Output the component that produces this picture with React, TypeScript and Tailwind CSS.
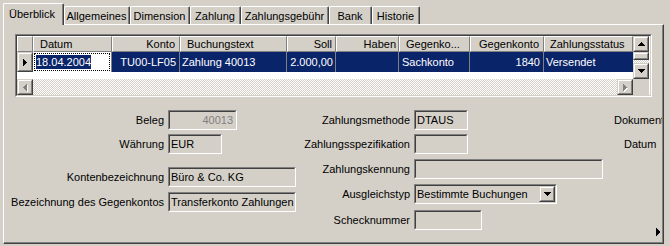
import React from "react";

type Kids = { children?: React.ReactNode };

function Tri({ dir, color = "#000", w, h }: { dir: "up" | "down" | "left" | "right"; color?: string; w: number; h: number }) {
  const pts =
    dir === "up"
      ? `0,${h} ${w},${h} ${w / 2},0`
      : dir === "down"
      ? `0,0 ${w},0 ${w / 2},${h}`
      : dir === "left"
      ? `${w},0 ${w},${h} 0,${h / 2}`
      : `0,0 0,${h} ${w},${h / 2}`;
  return (
    <svg width={w} height={h} viewBox={`0 0 ${w} ${h}`} shapeRendering="crispEdges" className="block">
      <polygon points={pts} fill={color} />
    </svg>
  );
}

function DisabledTri({ dir, w, h }: { dir: "left" | "right"; w: number; h: number }) {
  return (
    <div className="relative">
      <div className="absolute left-[1px] top-[1px]">
        <Tri dir={dir} color="#ffffff" w={w} h={h} />
      </div>
      <div className="relative">
        <Tri dir={dir} color="#808080" w={w} h={h} />
      </div>
    </div>
  );
}

function Raised({ cls, children }: { cls: string } & Kids) {
  return (
    <div className={`${cls} border border-t-[#d4d0c8] border-l-[#d4d0c8] border-b-[#404040] border-r-[#404040] bg-[#d4d0c8]`}>
      <div className="w-full h-full border border-t-white border-l-white border-b-[#808080] border-r-[#808080] flex items-center justify-center">
        {children}
      </div>
    </div>
  );
}

function Field({ cls, inner = "", children }: { cls: string; inner?: string } & Kids) {
  return (
    <div className={`${cls} border border-t-[#808080] border-l-[#808080] border-b-white border-r-white`}>
      <div
        className={`w-full h-full border border-t-[#404040] border-l-[#404040] border-b-[#d4d0c8] border-r-[#d4d0c8] bg-[#d4d0c8] flex items-center whitespace-nowrap overflow-hidden ${inner}`}
      >
        {children}
      </div>
    </div>
  );
}

const dither =
  "bg-[image:repeating-conic-gradient(#d4d0c8_0%_25%,#ffffff_0%_50%)] bg-[length:2px_2px]";

function HeadCell({ cls, children }: { cls: string } & Kids) {
  return (
    <div className={`${cls} h-full bg-[#d4d0c8] border-t border-l border-t-white border-l-white border-b border-r border-b-[#808080] border-r-[#808080] flex items-center whitespace-nowrap overflow-hidden`}>
      {children}
    </div>
  );
}

function DataCell({ cls, children }: { cls: string } & Kids) {
  return (
    <div className={`${cls} h-full border-r border-r-[#808080] flex items-center whitespace-nowrap overflow-hidden text-white`}>
      {children}
    </div>
  );
}

function Tab({ cls, label }: { cls: string; label: string }) {
  return (
    <div className={`${cls} h-[18px] border-t border-l border-t-white border-l-white border-r border-r-[#404040] rounded-tl-[2px] rounded-tr-[2px]`}>
      <div className="w-full h-full border-r border-r-[#808080] flex items-center justify-center pt-[1px] whitespace-nowrap">
        {label}
      </div>
    </div>
  );
}

export default function App() {
  return (
    <div className="w-[670px] h-[246px] bg-[#d4d0c8] overflow-hidden font-['Liberation_Sans',Arial,sans-serif] text-[11px] leading-[13px] text-black">
      {/* tab strip */}
      <div className="h-[24px] flex items-end pl-[3px]">
        <div className="relative z-10 w-[61px] h-[22px] -mb-px bg-[#d4d0c8] border-t border-l border-t-white border-l-white border-r border-r-[#404040] rounded-tl-[2px] rounded-tr-[2px]">
          <div className="w-full h-full border-r border-r-[#808080] flex justify-center pt-[4px] pr-[2px]">Überblick</div>
        </div>
        <Tab cls="w-[66px]" label="Allgemeines" />
        <Tab cls="w-[60px]" label="Dimension" />
        <Tab cls="w-[51px]" label="Zahlung" />
        <Tab cls="w-[88px]" label="Zahlungsgebühr" />
        <Tab cls="w-[43px]" label="Bank" />
        <Tab cls="w-[48px]" label="Historie" />
      </div>

      {/* panel */}
      <div className="ml-[3px] w-[661px] h-[220px] border border-t-white border-l-white border-r-[#404040] border-b-[#404040] bg-[#d4d0c8]">
        <div className="relative w-full h-full border-r border-b border-r-[#808080] border-b-[#808080] overflow-hidden">
          {/* grid */}
          <div className="ml-[11px] mt-[9px] w-[637px] h-[63px] border border-t-[#808080] border-l-[#808080] border-b-white border-r-white">
            <div className="w-full h-full border border-t-[#404040] border-l-[#404040] border-b-[#d4d0c8] border-r-[#d4d0c8] flex bg-white">
              <div className="w-[616px] flex flex-col">
                <div className="h-[16px] flex">
                  <HeadCell cls="w-[16px]" />
                  <HeadCell cls="w-[79px] pl-[6px]">Datum</HeadCell>
                  <HeadCell cls="w-[68px] justify-end pr-[4px]">Konto</HeadCell>
                  <HeadCell cls="w-[107px] pl-[6px]">Buchungstext</HeadCell>
                  <HeadCell cls="w-[49px] justify-end pr-[3px]">Soll</HeadCell>
                  <HeadCell cls="w-[63px] justify-end pr-[2px]">Haben</HeadCell>
                  <HeadCell cls="w-[71px] pl-[6px]">Gegenko...</HeadCell>
                  <HeadCell cls="w-[74px] justify-end pr-[4px]">Gegenkonto</HeadCell>
                  <HeadCell cls="w-[89px] pl-[5px]">Zahlungsstatus</HeadCell>
                </div>
                <div className="h-[20px] flex bg-[#0a246a]">
                  <Raised cls="w-[16px] h-full">
                    <div className="pr-[1px]">
                      <Tri dir="right" w={4} h={7} />
                    </div>
                  </Raised>
                  <div className="w-[79px] h-full bg-white border-r border-r-[#808080] p-[1px]">
                    <div className="w-full h-full border border-dotted border-black flex items-center pl-[1px]">
                      <span className="bg-[#0a246a] text-white px-[0px] leading-[14px]">18.04.2004</span>
                    </div>
                  </div>
                  <DataCell cls="w-[68px] justify-end pr-[3px]">TU00-LF05</DataCell>
                  <DataCell cls="w-[107px] pl-[2px]">Zahlung 40013</DataCell>
                  <DataCell cls="w-[49px] justify-end pr-[2px]">2.000,00</DataCell>
                  <DataCell cls="w-[63px]" />
                  <DataCell cls="w-[71px] pl-[3px]">Sachkonto</DataCell>
                  <DataCell cls="w-[74px] justify-end pr-[3px]">1840</DataCell>
                  <div className="w-[89px] h-full flex items-center pl-[2px] text-white whitespace-nowrap">Versendet</div>
                </div>
                <div className="h-[7px] bg-white" />
                <div className="h-[16px] flex">
                  <Raised cls="w-[16px] h-full">
                    <DisabledTri dir="left" w={4} h={7} />
                  </Raised>
                  <div className={`flex-1 h-full ${dither}`} />
                  <Raised cls="w-[16px] h-full">
                    <DisabledTri dir="right" w={4} h={7} />
                  </Raised>
                </div>
              </div>
              <div className="w-[16px] flex flex-col">
                <Raised cls="w-full h-[16px]">
                  <Tri dir="up" w={7} h={4} />
                </Raised>
                <Raised cls="w-full h-[8px]" />
                <div className={`w-full h-[3px] ${dither}`} />
                <Raised cls="w-full h-[16px]">
                  <Tri dir="down" w={7} h={4} />
                </Raised>
                <div className="w-full h-[16px] bg-[#d4d0c8]" />
              </div>
            </div>
          </div>

          {/* form */}
          <div className="mt-[13px] flex">
            {/* left column */}
            <div className="w-[292px] flex flex-col">
              <div className="h-[20px] flex items-center">
                <div className="w-[160px] text-right whitespace-nowrap">Beleg</div>
                <Field cls="ml-[4px] w-[69px] h-[20px]" inner="justify-end pr-[2px] text-[#808080]">40013</Field>
              </div>
              <div className="mt-[4px] h-[20px] flex items-center">
                <div className="w-[160px] text-right whitespace-nowrap">Währung</div>
                <Field cls="ml-[4px] w-[54px] h-[20px]" inner="pl-[1px]">EUR</Field>
              </div>
              <div className="mt-[13px] h-[20px] flex items-center">
                <div className="w-[160px] text-right whitespace-nowrap">Kontenbezeichnung</div>
                <Field cls="ml-[4px] w-[128px] h-[20px]" inner="pl-[1px]">Büro &amp; Co. KG</Field>
              </div>
              <div className="mt-[5px] h-[20px] flex items-center">
                <div className="w-[160px] text-right whitespace-nowrap">Bezeichnung des Gegenkontos</div>
                <Field cls="ml-[4px] w-[128px] h-[20px]" inner="pl-[1px]">Transferkonto Zahlungen</Field>
              </div>
            </div>

            {/* middle column */}
            <div className="w-[307px] flex flex-col">
              <div className="h-[20px] flex items-center">
                <div className="w-[114px] text-right whitespace-nowrap">Zahlungsmethode</div>
                <Field cls="ml-[4px] w-[54px] h-[20px]" inner="pl-[1px]">DTAUS</Field>
              </div>
              <div className="mt-[4px] h-[20px] flex items-center">
                <div className="w-[114px] text-right whitespace-nowrap">Zahlungsspezifikation</div>
                <Field cls="ml-[4px] w-[54px] h-[20px]" />
              </div>
              <div className="mt-[5px] h-[20px] flex items-center">
                <div className="w-[114px] text-right whitespace-nowrap">Zahlungskennung</div>
                <Field cls="ml-[4px] w-[189px] h-[20px]" />
              </div>
              <div className="mt-[5px] h-[20px] flex items-center">
                <div className="w-[114px] text-right whitespace-nowrap">Ausgleichstyp</div>
                <Field cls="ml-[4px] w-[143px] h-[20px]" inner="pl-[1px] justify-between">
                  <span>Bestimmte Buchungen</span>
                  <Raised cls="w-[16px] h-[16px]">
                    <Tri dir="down" w={7} h={4} />
                  </Raised>
                </Field>
              </div>
              <div className="mt-[6px] h-[20px] flex items-center">
                <div className="w-[114px] text-right whitespace-nowrap">Schecknummer</div>
                <Field cls="ml-[4px] w-[68px] h-[20px]" />
              </div>
            </div>

            {/* right column (clipped) */}
            <div className="flex-1 flex flex-col">
              <div className="h-[20px] flex items-center pl-[11px] whitespace-nowrap">Dokument</div>
              <div className="mt-[4px] h-[20px] flex items-center pl-[21px] whitespace-nowrap">Datum</div>
            </div>
          </div>

          <div className="absolute left-[652px] top-[203px]">
            <Tri dir="right" w={4} h={8} />
          </div>
        </div>
      </div>
    </div>
  );
}
